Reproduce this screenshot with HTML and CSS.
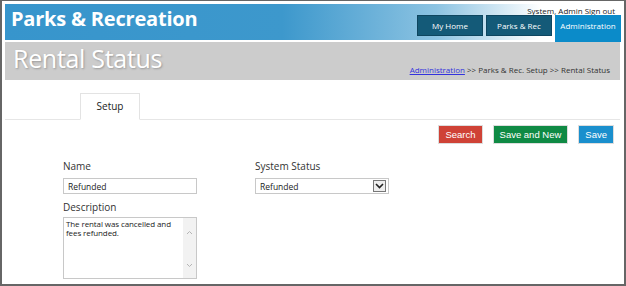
FILE: index.html
```html
<!DOCTYPE html>
<html lang="en">
<head>
    <meta charset="UTF-8">
    <title>Rental Status</title>
    <link rel="stylesheet" href="styles.css">
</head>
<body>
    <div class="frame">
        <div class="header">
            <span class="brand">Parks &amp; Recreation</span>
            <div class="right">
                <div class="user">System, Admin <a href="#">Sign out</a></div>
                <ul class="nav">
                    <li>My Home</li>
                    <li>Parks &amp; Rec</li>
                    <li class="active">Administration</li>
                </ul>
            </div>
        </div>
        <div class="titlebar">
            <h1>Rental Status</h1>
            <div class="crumbs"><a href="#">Administration</a> &gt;&gt; Parks &amp; Rec. Setup &gt;&gt; Rental Status</div>
        </div>
        <div class="tabs">
            <span class="tab">Setup</span>
        </div>
        <div class="actions">
            <button class="btn red">Search</button>
            <button class="btn green">Save and New</button>
            <button class="btn blue">Save</button>
        </div>
        <div class="form">
            <div class="col">
                <label>Name</label>
                <input type="text" value="Refunded" class="field">
                <label class="gap">Description</label>
                <div class="area">
                    <div class="areatext">The rental was cancelled and fees refunded.</div>
                    <div class="scroll">
                        <svg width="7" height="5" viewBox="0 0 7 5"><path d="M1 4l2.5-2.5L6 4" fill="none" stroke="#b5b5b5" stroke-width="1"/></svg>
                        <svg width="7" height="5" viewBox="0 0 7 5"><path d="M1 1l2.5 2.5L6 1" fill="none" stroke="#b5b5b5" stroke-width="1"/></svg>
                    </div>
                </div>
            </div>
            <div class="col">
                <label>System Status</label>
                <div class="select">
                    <span>Refunded</span>
                    <span class="arrow"><svg width="9" height="6" viewBox="0 0 9 6"><path d="M1 1l3.5 3.5L8 1" fill="none" stroke="#222" stroke-width="1.6"/></svg></span>
                </div>
            </div>
        </div>
    </div>
</body>
</html>
```

FILE: styles.css
```css
*{margin:0;padding:0;box-sizing:border-box;}
body{font-family:"Open Sans","Noto Sans",sans-serif;background:#fff;}
.frame{width:626px;height:286px;border:2px solid #666;border-top-width:1px;padding:3px 3px 0 3px;overflow:hidden;}

.header{height:36px;display:flex;justify-content:space-between;background:linear-gradient(90deg,#3795cc 0%,#3d98cc 45%,#8cc3e2 70%,#fff 87%);}
.brand{color:#fff;font-weight:700;font-size:20px;line-height:29px;padding-left:6px;letter-spacing:-0.2px;}
.right{display:flex;flex-direction:column;align-items:flex-end;}
.user{font-size:8px;color:#222;line-height:11px;padding-right:6px;padding-top:1px;}
.user a{color:#222;}
.nav{list-style:none;display:flex;gap:3px;margin-top:-1px;}
.nav li{background:#145a78;color:#fff;font-size:8px;width:66px;height:21px;line-height:19px;text-align:center;border:1px solid #0e4660;}
.nav li.active{background:#0b8bc9;border-color:#0b8bc9;height:27px;}

.titlebar{height:38px;margin-top:2px;margin-right:1px;background:#cccccc;display:flex;justify-content:space-between;align-items:flex-end;padding:0 10px 5px 8px;}
.titlebar h1{font-weight:400;font-size:25px;color:#fff;line-height:30px;margin-bottom:2px;text-shadow:1px 1px 2px #999;letter-spacing:-0.3px;}
.crumbs{font-size:8px;color:#333;}
.crumbs a{color:#3333dd;}

.tabs{height:40px;margin-right:1px;border-bottom:1px solid #e6e6e6;display:flex;align-items:flex-end;padding-left:75px;}
.tab{width:60px;height:27px;border:1px solid #e3e3e3;border-bottom:1px solid #fff;margin-bottom:-1px;background:#fff;font-size:10px;line-height:25px;text-align:center;color:#222;}

.actions{display:flex;justify-content:flex-end;gap:10px;padding:5px 7px 0 0;}
.btn{border:1px solid #ddd;color:#fff;font-family:"Liberation Sans",Arial,sans-serif;font-size:9.5px;height:19px;padding:0 6px;}
.red{background:#cf4236;}
.green{background:#0f8a44;}
.blue{background:#1a8fcd;}

.form{display:flex;gap:58px;padding:16px 0 0 58px;}
.col{display:flex;flex-direction:column;width:134px;}
label{font-size:10px;color:#333;line-height:13px;}
.gap{margin-top:7px;}
.field{margin-top:5px;width:134px;height:16px;border:1px solid #c8c8c8;font-family:"Open Sans","Noto Sans",sans-serif;font-size:8.5px;padding:0 4px;color:#222;}
.area{margin-top:3px;width:134px;height:62px;border:1px solid #c8c8c8;display:flex;}
.areatext{flex:1;font-size:8px;line-height:9px;padding:1px 2px;color:#222;letter-spacing:-0.1px;}
.scroll{width:13px;background:#f2f2f2;display:flex;flex-direction:column;justify-content:space-between;align-items:center;padding:12px 0 10px;}
.select{margin-top:5px;width:134px;height:16px;border:1px solid #c8c8c8;display:flex;justify-content:space-between;align-items:center;font-size:8.5px;padding-left:4px;color:#222;}
.arrow{width:13px;height:12px;border:1px solid #777;background:#eee;margin-right:2px;display:flex;align-items:center;justify-content:center;}
```
